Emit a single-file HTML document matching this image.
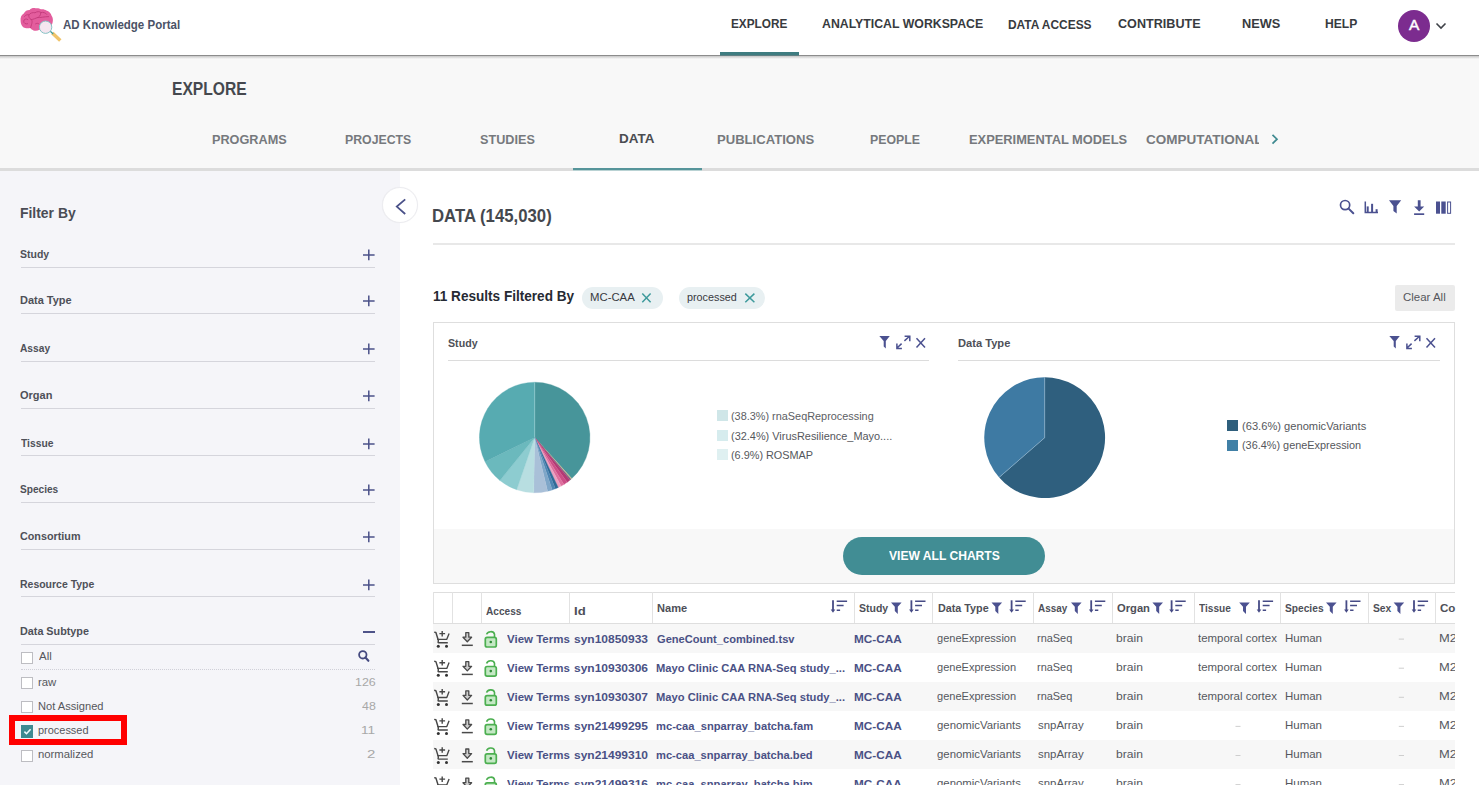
<!DOCTYPE html>
<html><head><meta charset="utf-8"><title>AD Knowledge Portal - Explore Data</title>
<style>
html,body{margin:0;padding:0;width:1479px;height:785px;overflow:hidden;background:#fff;}
body{position:relative;font-family:"Liberation Sans",sans-serif;}
.a{position:absolute;box-sizing:border-box;}
.t{position:absolute;white-space:pre;line-height:1;transform-origin:0 0;font-family:"Liberation Sans",sans-serif;}
.clipbox{position:absolute;overflow:hidden;}
svg{position:absolute;overflow:visible;}
</style></head><body>
<!-- ===== HEADER ===== -->
<div class="a" style="left:0;top:0;width:1479px;height:55px;background:#fff"></div>
<div class="a" style="left:0;top:55px;width:1479px;height:1px;background:#8c8c8c"></div>
<div class="a" style="left:0;top:56px;width:1479px;height:3px;background:linear-gradient(#c6c6c6,#f8f8f8)"></div>
<div class="a" style="left:720px;top:52px;width:79px;height:3px;background:#3e7c80"></div><div class="a" style="left:720px;top:55px;width:79px;height:1px;background:#5f7f82"></div>
<!-- logo -->
<svg style="left:0;top:0" width="80" height="55" viewBox="0 0 80 55">
  <path d="M20.6 21 C20.2 17.5 21.5 14.8 23.8 13.6 C25 11 27.3 9.9 29.6 10 C31 8.3 33.6 7.7 35.5 8.3 C37.5 7.9 39.6 8.3 41 9.3 C43.2 9 45.3 9.6 46.4 10.6 C49 11.4 51 13.3 51.6 15.8 C53 17.6 53.2 20.3 52.6 22.6 C52.2 25.5 50 28 47 29 C44.5 30.3 41.5 30.2 39.5 29.8 C37.8 30.8 35.3 31 33.5 30.4 C31.8 29.6 30.6 28.6 30.2 27.9 C28 28.3 25 28.3 23.6 27.4 C21.7 26 20.7 23.6 20.6 21 Z" fill="#e35d9d"/>
  <path d="M27.6 23.8 C25.6 24.4 23.6 23.2 23.7 21.2 C23.8 19.2 26 18.3 27.8 19.5 M24.5 16.4 C26 14.6 27.6 14.4 28.8 15 C30 13 33 12.2 35 12.8 C37 11.2 39.8 11.4 41 12.6 C43 12 45.6 12.6 46.8 14.4 M28.8 15 C28.6 17.2 29.4 18.4 31.2 19.6 C32.8 21 32 23 30.6 27.6 M31.2 19.6 C33.6 19.4 35.6 18.2 37.4 17.6 C39.4 17 40.6 15.6 40.8 12.8 M37.4 17.6 C40.4 17.8 44.5 16.6 48.6 16.6 M35.6 23.8 C37.5 22.8 38.8 23.2 40.2 25.5" fill="none" stroke="#c43c7c" stroke-width="0.95" stroke-linecap="round"/>
  <path d="M52.3 33 L60.3 40.6" stroke="#f0c46a" stroke-width="3.4" stroke-linecap="butt"/>
  <path d="M50.3 31.2 L53.2 34" stroke="#3f9a9a" stroke-width="1.3"/>
  <circle cx="45.6" cy="27.2" r="6.2" fill="#f5e6f0" stroke="#86c2c5" stroke-width="1.0"/>
</svg>
<!-- avatar -->
<div class="a" style="left:1398px;top:9.6px;width:32px;height:32px;border-radius:50%;background:#7c2c8f"></div>
<svg style="left:1434px;top:20px" width="14" height="12" viewBox="0 0 14 12"><path d="M2.5 3.5 L7 8 L11.5 3.5" fill="none" stroke="#3f4248" stroke-width="1.6"/></svg>

<!-- ===== SUBHEADER ===== -->
<div class="a" style="left:0;top:59px;width:1479px;height:109px;background:#f8f8f8"></div>
<div class="a" style="left:0;top:168px;width:1479px;height:3px;background:#dcdcdc"></div>
<div class="a" style="left:573px;top:168px;width:129px;height:2px;background:#56959a"></div><div class="a" style="left:573px;top:170px;width:129px;height:1px;background:#b9d2d3"></div>
<svg style="left:1268px;top:132px" width="14" height="14" viewBox="0 0 14 14"><path d="M4.5 2.8 L9 7.2 L4.5 11.6" fill="none" stroke="#3f8a90" stroke-width="1.7"/></svg>

<!-- ===== SIDEBAR ===== -->
<div class="a" style="left:0;top:171px;width:400px;height:614px;background:#f5f5f9"></div>
<!-- subtype list -->
<div class="a" style="left:20.5px;top:669px;width:354.5px;height:0;border-top:1px dotted #d0d0d8"></div>
<svg style="left:356px;top:650px" width="16" height="14" viewBox="0 0 16 14"><circle cx="6.8" cy="4.8" r="3.7" fill="none" stroke="#454a80" stroke-width="1.8"/><path d="M9.4 7.5 L12.4 10.8" stroke="#454a80" stroke-width="2.1" stroke-linecap="round"/></svg>
<div class="a" style="left:363px;top:631px;width:12px;height:2px;background:#4e5389"></div>
<div class="a" style="left:20.5px;top:652px;width:12.5px;height:12px;background:#fff;border:1px solid #bdbdc2"></div>
<div class="a" style="left:20.5px;top:676.5px;width:12.5px;height:12px;background:#fff;border:1px solid #bdbdc2"></div>
<div class="a" style="left:20.5px;top:701px;width:12.5px;height:12px;background:#fff;border:1px solid #bdbdc2"></div>
<div class="a" style="left:20.5px;top:725px;width:12.5px;height:12.8px;background:#3e8a91"></div>
<svg style="left:20.5px;top:725px" width="13" height="13" viewBox="0 0 13 13"><path d="M3.4 6.6 L5.5 8.7 L9.6 4.3" fill="none" stroke="#f0fcff" stroke-width="1.6"/></svg>
<div class="a" style="left:20.5px;top:749.5px;width:12.5px;height:12px;background:#fff;border:1px solid #bdbdc2"></div>
<div class="a" style="left:9px;top:715px;width:118px;height:30px;border:6px solid #ff0000"></div>

<!-- collapse circle -->
<div class="a" style="left:382px;top:187px;width:36px;height:36px;border-radius:50%;background:#fff;border:1px solid #ececf0;box-shadow:0 0 1px rgba(0,0,0,0.05)"></div>
<svg style="left:390px;top:195px" width="20" height="22" viewBox="0 0 20 22"><path d="M15.2 4.4 L6.8 11.6 L15.2 19" fill="none" stroke="#4a5189" stroke-width="1.8"/></svg>

<!-- ===== MAIN ===== -->
<!-- top icons -->
<svg style="left:1330px;top:195px" width="130" height="25" viewBox="1330 195 130 25">
  <circle cx="1345.1" cy="205.1" r="4.6" fill="none" stroke="#4b5190" stroke-width="1.7"/>
  <path d="M1348.6 208.6 L1353.3 213.3" stroke="#4b5190" stroke-width="2" stroke-linecap="round"/>
  <path d="M1365.3 201.5 L1365.3 212.5 L1378 212.5" fill="none" stroke="#4b5190" stroke-width="1.5"/>
  <rect x="1366.7" y="206.4" width="2" height="6" fill="#4b5190"/>
  <rect x="1371.1" y="203.8" width="2" height="8.6" fill="#4b5190"/>
  <rect x="1375.6" y="209.2" width="2" height="3.3" fill="#4b5190"/>
  <path d="M1389 200.3 L1401.2 200.3 L1396.7 206 L1396.7 213.5 L1393.4 211 L1393.4 206 Z" fill="#4b5190"/>
  <path d="M1417.8 200.3 L1420.6 200.3 L1420.6 206.4 L1424.2 206.4 L1419.2 211.4 L1414.1 206.4 L1417.8 206.4 Z" fill="#4b5190"/>
  <rect x="1414.1" y="213.3" width="10.1" height="1.7" fill="#4b5190"/>
  <rect x="1436" y="201.5" width="4" height="12.2" fill="#4b5190"/>
  <rect x="1441.3" y="201.5" width="4.4" height="12.2" fill="#4b5190"/>
  <rect x="1447.6" y="202" width="3" height="11.3" fill="none" stroke="#4b5190" stroke-width="1"/>
</svg>
<div class="a" style="left:433px;top:243px;width:1022px;height:2px;background:#e8e8e8"></div>
<!-- chips -->
<div class="a" style="left:582.4px;top:286.8px;width:80.5px;height:22px;border-radius:11px;background:#e8f0f2"></div>
<div class="a" style="left:679.1px;top:286.8px;width:85.5px;height:22px;border-radius:11px;background:#e8f0f2"></div>
<svg style="left:630px;top:285px" width="140" height="25" viewBox="630 285 140 25">
  <path d="M642.3 293.6 L650.6 302.2 M650.6 293.6 L642.3 302.2" stroke="#3e9a9c" stroke-width="1.5"/>
  <path d="M745.3 293.6 L754.4 302.2 M754.4 293.6 L745.3 302.2" stroke="#3e9a9c" stroke-width="1.5"/>
</svg>
<div class="a" style="left:1395px;top:285px;width:60px;height:26px;background:#ebebeb;border-radius:2px"></div>

<!-- chart box -->
<div class="a" style="left:433px;top:322px;width:1022px;height:262px;border:1px solid #dedede;background:#fff"></div>
<div class="a" style="left:434px;top:529px;width:1020px;height:54px;background:#f8f8f8"></div>
<div class="a" style="left:448px;top:360px;width:481px;height:1px;background:#dcdcdc"></div>
<div class="a" style="left:958px;top:360px;width:482px;height:1px;background:#dcdcdc"></div>
<svg style="left:870px;top:330px" width="580" height="25" viewBox="870 330 580 25">
  <g id="ci">
  <path d="M879.3 336.1 L889.8 336.1 L885.8 341 L885.8 348.5 L883.7 346.6 L883.7 341 Z" fill="#4b5190"/>
  <path d="M904.4 340.9 L909.3 336.5 M904.6 336.3 L909.8 336.3 L909.8 341.2" fill="none" stroke="#4b5190" stroke-width="1.5"/>
  <path d="M901.6 343.6 L897 348 M896.9 343.5 L896.9 348.6 L901.9 348.6" fill="none" stroke="#4b5190" stroke-width="1.5"/>
  <path d="M916.5 338.3 L925 347.6 M925 338.3 L916.5 347.6" stroke="#4b5190" stroke-width="1.5"/>
  </g>
  <use href="#ci" x="510"/>
</svg>
<!-- legend squares -->
<div class="a" style="left:717.3px;top:410.3px;width:11px;height:11px;background:#cfe6e8"></div>
<div class="a" style="left:717.3px;top:430px;width:11px;height:11px;background:#d6ecee"></div>
<div class="a" style="left:717.3px;top:449.2px;width:11px;height:11px;background:#dff0f1"></div>
<div class="a" style="left:1227.3px;top:420.3px;width:11px;height:11px;background:#2f5f7c"></div>
<div class="a" style="left:1227.3px;top:439.7px;width:11px;height:11px;background:#4080a6"></div>
<!-- button -->
<div class="a" style="left:843px;top:537.3px;width:202px;height:37.7px;border-radius:19px;background:#418d94"></div>

<div class="a" style="left:20.5px;top:266.7px;width:354.5px;height:1px;background:#d5d5dc"></div>
<svg style="left:362px;top:249.2px" width="14" height="12" viewBox="0 0 14 12"><path d="M1 6 L12.6 6 M6.8 0.5 L6.8 11.3" stroke="#4b5189" stroke-width="1.5"/></svg>
<div class="a" style="left:20.5px;top:312.8px;width:354.5px;height:1px;background:#d5d5dc"></div>
<svg style="left:362px;top:295.3px" width="14" height="12" viewBox="0 0 14 12"><path d="M1 6 L12.6 6 M6.8 0.5 L6.8 11.3" stroke="#4b5189" stroke-width="1.5"/></svg>
<div class="a" style="left:20.5px;top:360.5px;width:354.5px;height:1px;background:#d5d5dc"></div>
<svg style="left:362px;top:343.0px" width="14" height="12" viewBox="0 0 14 12"><path d="M1 6 L12.6 6 M6.8 0.5 L6.8 11.3" stroke="#4b5189" stroke-width="1.5"/></svg>
<div class="a" style="left:20.5px;top:407.7px;width:354.5px;height:1px;background:#d5d5dc"></div>
<svg style="left:362px;top:390.2px" width="14" height="12" viewBox="0 0 14 12"><path d="M1 6 L12.6 6 M6.8 0.5 L6.8 11.3" stroke="#4b5189" stroke-width="1.5"/></svg>
<div class="a" style="left:20.5px;top:455.3px;width:354.5px;height:1px;background:#d5d5dc"></div>
<svg style="left:362px;top:437.8px" width="14" height="12" viewBox="0 0 14 12"><path d="M1 6 L12.6 6 M6.8 0.5 L6.8 11.3" stroke="#4b5189" stroke-width="1.5"/></svg>
<div class="a" style="left:20.5px;top:501.8px;width:354.5px;height:1px;background:#d5d5dc"></div>
<svg style="left:362px;top:484.3px" width="14" height="12" viewBox="0 0 14 12"><path d="M1 6 L12.6 6 M6.8 0.5 L6.8 11.3" stroke="#4b5189" stroke-width="1.5"/></svg>
<div class="a" style="left:20.5px;top:548.8px;width:354.5px;height:1px;background:#d5d5dc"></div>
<svg style="left:362px;top:531.3px" width="14" height="12" viewBox="0 0 14 12"><path d="M1 6 L12.6 6 M6.8 0.5 L6.8 11.3" stroke="#4b5189" stroke-width="1.5"/></svg>
<div class="a" style="left:20.5px;top:596.2px;width:354.5px;height:1px;background:#d5d5dc"></div>
<svg style="left:362px;top:578.7px" width="14" height="12" viewBox="0 0 14 12"><path d="M1 6 L12.6 6 M6.8 0.5 L6.8 11.3" stroke="#4b5189" stroke-width="1.5"/></svg>
<div class="a" style="left:20.5px;top:643.7px;width:354.5px;height:1px;background:#d5d5dc"></div>
<svg style="left:0;top:0" width="1479" height="785" viewBox="0 0 1479 785">
<path d="M534.70 437.50 L534.70 382.20 A55.3 55.3 0 0 1 571.77 478.53 Z" fill="#47959a" stroke="#47959a" stroke-width="0.3"/>
<path d="M534.70 437.50 L571.77 478.53 A55.3 55.3 0 0 1 570.98 479.24 Z" fill="#c9b98f" stroke="#c9b98f" stroke-width="0.3"/>
<path d="M534.70 437.50 L570.98 479.24 A55.3 55.3 0 0 1 570.10 479.99 Z" fill="#6c6480" stroke="#6c6480" stroke-width="0.3"/>
<path d="M534.70 437.50 L570.10 479.99 A55.3 55.3 0 0 1 567.20 482.24 Z" fill="#b23a74" stroke="#b23a74" stroke-width="0.3"/>
<path d="M534.70 437.50 L567.20 482.24 A55.3 55.3 0 0 1 564.00 484.40 Z" fill="#cc4d86" stroke="#cc4d86" stroke-width="0.3"/>
<path d="M534.70 437.50 L564.00 484.40 A55.3 55.3 0 0 1 561.09 486.10 Z" fill="#de6f9e" stroke="#de6f9e" stroke-width="0.3"/>
<path d="M534.70 437.50 L561.09 486.10 A55.3 55.3 0 0 1 558.25 487.54 Z" fill="#eba0c0" stroke="#eba0c0" stroke-width="0.3"/>
<path d="M534.70 437.50 L558.25 487.54 A55.3 55.3 0 0 1 555.42 488.77 Z" fill="#2f6a96" stroke="#2f6a96" stroke-width="0.3"/>
<path d="M534.70 437.50 L555.42 488.77 A55.3 55.3 0 0 1 552.25 489.94 Z" fill="#4e86b3" stroke="#4e86b3" stroke-width="0.3"/>
<path d="M534.70 437.50 L552.25 489.94 A55.3 55.3 0 0 1 547.61 491.27 Z" fill="#7ea6c8" stroke="#7ea6c8" stroke-width="0.3"/>
<path d="M534.70 437.50 L547.61 491.27 A55.3 55.3 0 0 1 533.73 492.79 Z" fill="#a9c0d8" stroke="#a9c0d8" stroke-width="0.3"/>
<path d="M534.70 437.50 L533.73 492.79 A55.3 55.3 0 0 1 516.70 489.79 Z" fill="#b8dee1" stroke="#b8dee1" stroke-width="0.3"/>
<path d="M534.70 437.50 L516.70 489.79 A55.3 55.3 0 0 1 499.90 480.48 Z" fill="#8dccd0" stroke="#8dccd0" stroke-width="0.3"/>
<path d="M534.70 437.50 L499.90 480.48 A55.3 55.3 0 0 1 485.00 461.74 Z" fill="#6bb9bd" stroke="#6bb9bd" stroke-width="0.3"/>
<path d="M534.70 437.50 L485.00 461.74 A55.3 55.3 0 0 1 534.70 382.20 Z" fill="#57abb1" stroke="#57abb1" stroke-width="0.3"/>
<path d="M534.7 437.5 L534.7 382.2" stroke="#9fd3d6" stroke-width="0.6"/>
<path d="M1044.70 437.70 L1044.70 377.30 A60.4 60.4 0 1 1 999.18 477.41 Z" fill="#2f5f7e"/>
<path d="M1044.70 437.70 L999.18 477.41 A60.4 60.4 0 0 1 1044.70 377.30 Z" fill="#3e7aa3"/>
<path d="M1044.7 437.7 L1044.7 377.3 M1044.7 437.7 L999.1 477.3" stroke="#8fb4cc" stroke-width="0.6"/>
</svg>
<div class="clipbox" style="left:433px;top:585px;width:1022px;height:200px">
<div class="a" style="left:0;top:38.8px;width:1022px;height:29.1px;background:#f7f7f7"></div>
<div class="a" style="left:0;top:67.9px;width:1022px;height:29.1px;background:#ffffff"></div>
<div class="a" style="left:0;top:97.0px;width:1022px;height:29.1px;background:#f7f7f7"></div>
<div class="a" style="left:0;top:126.1px;width:1022px;height:29.1px;background:#ffffff"></div>
<div class="a" style="left:0;top:155.2px;width:1022px;height:29.1px;background:#f7f7f7"></div>
<div class="a" style="left:0;top:184.3px;width:1022px;height:29.1px;background:#ffffff"></div>
<div class="a" style="left:0;top:7px;width:1022px;height:1px;background:#dedede"></div>
<div class="a" style="left:0;top:37.5px;width:1022px;height:1.6px;background:#dedede"></div>
<div class="a" style="left:-0.1px;top:7px;width:1px;height:31px;background:#e2e2e2"></div>
<div class="a" style="left:19.1px;top:7px;width:1px;height:31px;background:#e2e2e2"></div>
<div class="a" style="left:48.0px;top:7px;width:1px;height:31px;background:#e2e2e2"></div>
<div class="a" style="left:135.9px;top:7px;width:1px;height:31px;background:#e2e2e2"></div>
<div class="a" style="left:219.0px;top:7px;width:1px;height:31px;background:#e2e2e2"></div>
<div class="a" style="left:420.8px;top:7px;width:1px;height:31px;background:#e2e2e2"></div>
<div class="a" style="left:499.0px;top:7px;width:1px;height:31px;background:#e2e2e2"></div>
<div class="a" style="left:600.0px;top:7px;width:1px;height:31px;background:#e2e2e2"></div>
<div class="a" style="left:678.9px;top:7px;width:1px;height:31px;background:#e2e2e2"></div>
<div class="a" style="left:760.9px;top:7px;width:1px;height:31px;background:#e2e2e2"></div>
<div class="a" style="left:846.9px;top:7px;width:1px;height:31px;background:#e2e2e2"></div>
<div class="a" style="left:934.8px;top:7px;width:1px;height:31px;background:#e2e2e2"></div>
<div class="a" style="left:1002.0px;top:7px;width:1px;height:31px;background:#e2e2e2"></div>
</div>
<svg style="left:0;top:0" width="1479" height="785" viewBox="0 0 1479 785">
<defs><clipPath id="tc"><rect x="433" y="585" width="1022" height="200"/></clipPath></defs><g clip-path="url(#tc)">
<path d="M833.0 600.3 L833.0 611.0" stroke="#464b85" stroke-width="1.8"/><path d="M830.7 609.5 L833.0 612.7 L835.3 609.5 Z" fill="#464b85"/><path d="M836.7 601.3 L847.1 601.3 M836.7 605.6 L843.6 605.6 M836.7 610.3 L840.1 610.3" stroke="#464b85" stroke-width="1.5"/>
<path d="M891.0 602.4 L901.6 602.4 L897.8 606.8 L897.8 614.0 L894.8 611.0 L894.8 606.8 Z" fill="#4b5190"/>
<path d="M911.4 600.3 L911.4 611.0" stroke="#464b85" stroke-width="1.8"/><path d="M909.1 609.5 L911.4 612.7 L913.7 609.5 Z" fill="#464b85"/><path d="M915.1 601.3 L925.5 601.3 M915.1 605.6 L922.0 605.6 M915.1 610.3 L918.5 610.3" stroke="#464b85" stroke-width="1.5"/>
<path d="M991.5 602.4 L1002.1 602.4 L998.3 606.8 L998.3 614.0 L995.3 611.0 L995.3 606.8 Z" fill="#4b5190"/>
<path d="M1011.6 600.3 L1011.6 611.0" stroke="#464b85" stroke-width="1.8"/><path d="M1009.3 609.5 L1011.6 612.7 L1013.9 609.5 Z" fill="#464b85"/><path d="M1015.3 601.3 L1025.7 601.3 M1015.3 605.6 L1022.2 605.6 M1015.3 610.3 L1018.7 610.3" stroke="#464b85" stroke-width="1.5"/>
<path d="M1071.0 602.4 L1081.6 602.4 L1077.8 606.8 L1077.8 614.0 L1074.8 611.0 L1074.8 606.8 Z" fill="#4b5190"/>
<path d="M1091.2 600.3 L1091.2 611.0" stroke="#464b85" stroke-width="1.8"/><path d="M1088.9 609.5 L1091.2 612.7 L1093.5 609.5 Z" fill="#464b85"/><path d="M1094.9 601.3 L1105.3 601.3 M1094.9 605.6 L1101.8 605.6 M1094.9 610.3 L1098.3 610.3" stroke="#464b85" stroke-width="1.5"/>
<path d="M1152.4 602.4 L1163.0 602.4 L1159.2 606.8 L1159.2 614.0 L1156.2 611.0 L1156.2 606.8 Z" fill="#4b5190"/>
<path d="M1171.6 600.3 L1171.6 611.0" stroke="#464b85" stroke-width="1.8"/><path d="M1169.3 609.5 L1171.6 612.7 L1173.9 609.5 Z" fill="#464b85"/><path d="M1175.3 601.3 L1185.7 601.3 M1175.3 605.6 L1182.2 605.6 M1175.3 610.3 L1178.7 610.3" stroke="#464b85" stroke-width="1.5"/>
<path d="M1239.2 602.4 L1249.8 602.4 L1246.0 606.8 L1246.0 614.0 L1243.0 611.0 L1243.0 606.8 Z" fill="#4b5190"/>
<path d="M1259.0 600.3 L1259.0 611.0" stroke="#464b85" stroke-width="1.8"/><path d="M1256.7 609.5 L1259.0 612.7 L1261.3 609.5 Z" fill="#464b85"/><path d="M1262.7 601.3 L1273.1 601.3 M1262.7 605.6 L1269.6 605.6 M1262.7 610.3 L1266.1 610.3" stroke="#464b85" stroke-width="1.5"/>
<path d="M1326.0 602.4 L1336.6 602.4 L1332.8 606.8 L1332.8 614.0 L1329.8 611.0 L1329.8 606.8 Z" fill="#4b5190"/>
<path d="M1346.4 600.3 L1346.4 611.0" stroke="#464b85" stroke-width="1.8"/><path d="M1344.1 609.5 L1346.4 612.7 L1348.7 609.5 Z" fill="#464b85"/><path d="M1350.1 601.3 L1360.5 601.3 M1350.1 605.6 L1357.0 605.6 M1350.1 610.3 L1353.5 610.3" stroke="#464b85" stroke-width="1.5"/>
<path d="M1393.6 602.4 L1404.2 602.4 L1400.4 606.8 L1400.4 614.0 L1397.4 611.0 L1397.4 606.8 Z" fill="#4b5190"/>
<path d="M1414.0 600.3 L1414.0 611.0" stroke="#464b85" stroke-width="1.8"/><path d="M1411.7 609.5 L1414.0 612.7 L1416.3 609.5 Z" fill="#464b85"/><path d="M1417.7 601.3 L1428.1 601.3 M1417.7 605.6 L1424.6 605.6 M1417.7 610.3 L1421.1 610.3" stroke="#464b85" stroke-width="1.5"/>
<g transform="translate(0 0.00)"><path d="M434.2 632.1 L435.9 632.5 L438.3 640.2 C438.5 641.8 437.6 642.7 438.6 642.7 L447.8 642.7" fill="none" stroke="#474747" stroke-width="1.45" stroke-linejoin="round"/><path d="M437.3 639.3 L446.8 639.3 L449.1 633.4" fill="none" stroke="#474747" stroke-width="1.35" stroke-linejoin="round"/><path d="M442.2 630.9 L442.2 636.4 M439.4 633.6 L445.1 633.6" stroke="#474747" stroke-width="1.4"/><circle cx="438.3" cy="646.2" r="1.5" fill="#333"/><circle cx="446.5" cy="646.2" r="1.5" fill="#333"/><path d="M465.8 632.6 L468.8 632.6 L468.8 637.2 L471.6 637.2 L467.3 641.8 L463 637.2 L465.8 637.2 Z" fill="#cfcfcf" stroke="#4a4a4a" stroke-width="1.3" stroke-linejoin="round"/><path d="M461.8 645.3 L472.8 645.3" stroke="#4a4a4a" stroke-width="1.5"/><rect x="485.3" y="637.4" width="11" height="9.6" rx="1.8" fill="#c4e8c4" stroke="#4caf50" stroke-width="1.7"/><path d="M486.6 634.4 C487.4 631.2 493.6 630.4 494.5 634.2 L494.5 637.4" fill="none" stroke="#4caf50" stroke-width="1.6"/><circle cx="490.8" cy="642" r="1.3" fill="#2e8b36"/></g>
<g transform="translate(0 29.10)"><path d="M434.2 632.1 L435.9 632.5 L438.3 640.2 C438.5 641.8 437.6 642.7 438.6 642.7 L447.8 642.7" fill="none" stroke="#474747" stroke-width="1.45" stroke-linejoin="round"/><path d="M437.3 639.3 L446.8 639.3 L449.1 633.4" fill="none" stroke="#474747" stroke-width="1.35" stroke-linejoin="round"/><path d="M442.2 630.9 L442.2 636.4 M439.4 633.6 L445.1 633.6" stroke="#474747" stroke-width="1.4"/><circle cx="438.3" cy="646.2" r="1.5" fill="#333"/><circle cx="446.5" cy="646.2" r="1.5" fill="#333"/><path d="M465.8 632.6 L468.8 632.6 L468.8 637.2 L471.6 637.2 L467.3 641.8 L463 637.2 L465.8 637.2 Z" fill="#cfcfcf" stroke="#4a4a4a" stroke-width="1.3" stroke-linejoin="round"/><path d="M461.8 645.3 L472.8 645.3" stroke="#4a4a4a" stroke-width="1.5"/><rect x="485.3" y="637.4" width="11" height="9.6" rx="1.8" fill="#c4e8c4" stroke="#4caf50" stroke-width="1.7"/><path d="M486.6 634.4 C487.4 631.2 493.6 630.4 494.5 634.2 L494.5 637.4" fill="none" stroke="#4caf50" stroke-width="1.6"/><circle cx="490.8" cy="642" r="1.3" fill="#2e8b36"/></g>
<g transform="translate(0 58.20)"><path d="M434.2 632.1 L435.9 632.5 L438.3 640.2 C438.5 641.8 437.6 642.7 438.6 642.7 L447.8 642.7" fill="none" stroke="#474747" stroke-width="1.45" stroke-linejoin="round"/><path d="M437.3 639.3 L446.8 639.3 L449.1 633.4" fill="none" stroke="#474747" stroke-width="1.35" stroke-linejoin="round"/><path d="M442.2 630.9 L442.2 636.4 M439.4 633.6 L445.1 633.6" stroke="#474747" stroke-width="1.4"/><circle cx="438.3" cy="646.2" r="1.5" fill="#333"/><circle cx="446.5" cy="646.2" r="1.5" fill="#333"/><path d="M465.8 632.6 L468.8 632.6 L468.8 637.2 L471.6 637.2 L467.3 641.8 L463 637.2 L465.8 637.2 Z" fill="#cfcfcf" stroke="#4a4a4a" stroke-width="1.3" stroke-linejoin="round"/><path d="M461.8 645.3 L472.8 645.3" stroke="#4a4a4a" stroke-width="1.5"/><rect x="485.3" y="637.4" width="11" height="9.6" rx="1.8" fill="#c4e8c4" stroke="#4caf50" stroke-width="1.7"/><path d="M486.6 634.4 C487.4 631.2 493.6 630.4 494.5 634.2 L494.5 637.4" fill="none" stroke="#4caf50" stroke-width="1.6"/><circle cx="490.8" cy="642" r="1.3" fill="#2e8b36"/></g>
<g transform="translate(0 87.30)"><path d="M434.2 632.1 L435.9 632.5 L438.3 640.2 C438.5 641.8 437.6 642.7 438.6 642.7 L447.8 642.7" fill="none" stroke="#474747" stroke-width="1.45" stroke-linejoin="round"/><path d="M437.3 639.3 L446.8 639.3 L449.1 633.4" fill="none" stroke="#474747" stroke-width="1.35" stroke-linejoin="round"/><path d="M442.2 630.9 L442.2 636.4 M439.4 633.6 L445.1 633.6" stroke="#474747" stroke-width="1.4"/><circle cx="438.3" cy="646.2" r="1.5" fill="#333"/><circle cx="446.5" cy="646.2" r="1.5" fill="#333"/><path d="M465.8 632.6 L468.8 632.6 L468.8 637.2 L471.6 637.2 L467.3 641.8 L463 637.2 L465.8 637.2 Z" fill="#cfcfcf" stroke="#4a4a4a" stroke-width="1.3" stroke-linejoin="round"/><path d="M461.8 645.3 L472.8 645.3" stroke="#4a4a4a" stroke-width="1.5"/><rect x="485.3" y="637.4" width="11" height="9.6" rx="1.8" fill="#c4e8c4" stroke="#4caf50" stroke-width="1.7"/><path d="M486.6 634.4 C487.4 631.2 493.6 630.4 494.5 634.2 L494.5 637.4" fill="none" stroke="#4caf50" stroke-width="1.6"/><circle cx="490.8" cy="642" r="1.3" fill="#2e8b36"/></g>
<g transform="translate(0 116.40)"><path d="M434.2 632.1 L435.9 632.5 L438.3 640.2 C438.5 641.8 437.6 642.7 438.6 642.7 L447.8 642.7" fill="none" stroke="#474747" stroke-width="1.45" stroke-linejoin="round"/><path d="M437.3 639.3 L446.8 639.3 L449.1 633.4" fill="none" stroke="#474747" stroke-width="1.35" stroke-linejoin="round"/><path d="M442.2 630.9 L442.2 636.4 M439.4 633.6 L445.1 633.6" stroke="#474747" stroke-width="1.4"/><circle cx="438.3" cy="646.2" r="1.5" fill="#333"/><circle cx="446.5" cy="646.2" r="1.5" fill="#333"/><path d="M465.8 632.6 L468.8 632.6 L468.8 637.2 L471.6 637.2 L467.3 641.8 L463 637.2 L465.8 637.2 Z" fill="#cfcfcf" stroke="#4a4a4a" stroke-width="1.3" stroke-linejoin="round"/><path d="M461.8 645.3 L472.8 645.3" stroke="#4a4a4a" stroke-width="1.5"/><rect x="485.3" y="637.4" width="11" height="9.6" rx="1.8" fill="#c4e8c4" stroke="#4caf50" stroke-width="1.7"/><path d="M486.6 634.4 C487.4 631.2 493.6 630.4 494.5 634.2 L494.5 637.4" fill="none" stroke="#4caf50" stroke-width="1.6"/><circle cx="490.8" cy="642" r="1.3" fill="#2e8b36"/></g>
<g transform="translate(0 145.50)"><path d="M434.2 632.1 L435.9 632.5 L438.3 640.2 C438.5 641.8 437.6 642.7 438.6 642.7 L447.8 642.7" fill="none" stroke="#474747" stroke-width="1.45" stroke-linejoin="round"/><path d="M437.3 639.3 L446.8 639.3 L449.1 633.4" fill="none" stroke="#474747" stroke-width="1.35" stroke-linejoin="round"/><path d="M442.2 630.9 L442.2 636.4 M439.4 633.6 L445.1 633.6" stroke="#474747" stroke-width="1.4"/><circle cx="438.3" cy="646.2" r="1.5" fill="#333"/><circle cx="446.5" cy="646.2" r="1.5" fill="#333"/><path d="M465.8 632.6 L468.8 632.6 L468.8 637.2 L471.6 637.2 L467.3 641.8 L463 637.2 L465.8 637.2 Z" fill="#cfcfcf" stroke="#4a4a4a" stroke-width="1.3" stroke-linejoin="round"/><path d="M461.8 645.3 L472.8 645.3" stroke="#4a4a4a" stroke-width="1.5"/><rect x="485.3" y="637.4" width="11" height="9.6" rx="1.8" fill="#c4e8c4" stroke="#4caf50" stroke-width="1.7"/><path d="M486.6 634.4 C487.4 631.2 493.6 630.4 494.5 634.2 L494.5 637.4" fill="none" stroke="#4caf50" stroke-width="1.6"/><circle cx="490.8" cy="642" r="1.3" fill="#2e8b36"/></g>
<path d="M1398.8 639.1 L1404 639.1" stroke="#c8c8c8" stroke-width="0.9"/>
<path d="M1398.8 668.2 L1404 668.2" stroke="#c8c8c8" stroke-width="0.9"/>
<path d="M1398.8 697.3 L1404 697.3" stroke="#c8c8c8" stroke-width="0.9"/>
<path d="M1398.8 726.4 L1404 726.4" stroke="#c8c8c8" stroke-width="0.9"/>
<path d="M1235.5 726.4 L1240.5 726.4" stroke="#c8c8c8" stroke-width="0.9"/>
<path d="M1398.8 755.5 L1404 755.5" stroke="#c8c8c8" stroke-width="0.9"/>
<path d="M1235.5 755.5 L1240.5 755.5" stroke="#c8c8c8" stroke-width="0.9"/>
<path d="M1398.8 784.6 L1404 784.6" stroke="#c8c8c8" stroke-width="0.9"/>
<path d="M1235.5 784.6 L1240.5 784.6" stroke="#c8c8c8" stroke-width="0.9"/>
</g></svg>
<div class="t" style="left:63.47px;top:19.00px;font-size:12.4px;font-weight:bold;color:#4b5266;transform:scaleX(0.9297)">AD Knowledge Portal</div>
<div class="t" style="left:730.92px;top:17.38px;font-size:13.6px;font-weight:bold;color:#383b40;transform:scaleX(0.8676)">EXPLORE</div>
<div class="t" style="left:821.84px;top:16.78px;font-size:13.6px;font-weight:bold;color:#383b40;transform:scaleX(0.9054)">ANALYTICAL WORKSPACE</div>
<div class="t" style="left:1008.41px;top:17.78px;font-size:13.6px;font-weight:bold;color:#383b40;transform:scaleX(0.8781)">DATA ACCESS</div>
<div class="t" style="left:1118.21px;top:16.68px;font-size:13.6px;font-weight:bold;color:#383b40;transform:scaleX(0.9271)">CONTRIBUTE</div>
<div class="t" style="left:1241.66px;top:16.68px;font-size:13.6px;font-weight:bold;color:#383b40;transform:scaleX(0.9371)">NEWS</div>
<div class="t" style="left:1324.90px;top:16.68px;font-size:13.6px;font-weight:bold;color:#383b40;transform:scaleX(0.8918)">HELP</div>
<div class="t" style="left:1408.97px;top:17.30px;font-size:15px;font-weight:normal;color:#ffffff;transform:scaleX(1.0329);-webkit-text-stroke:0.45px #fff">A</div>
<div class="t" style="left:171.54px;top:80.14px;font-size:18.5px;font-weight:bold;color:#45484e;transform:scaleX(0.8451)">EXPLORE</div>
<div class="t" style="left:211.95px;top:133.19px;font-size:13.0px;font-weight:bold;color:#76797d;transform:scaleX(0.9757)">PROGRAMS</div>
<div class="t" style="left:345.47px;top:133.19px;font-size:13.0px;font-weight:bold;color:#76797d;transform:scaleX(0.9455)">PROJECTS</div>
<div class="t" style="left:480.24px;top:133.19px;font-size:13.0px;font-weight:bold;color:#76797d;transform:scaleX(0.9730)">STUDIES</div>
<div class="t" style="left:618.90px;top:132.39px;font-size:13.0px;font-weight:bold;color:#4a4c51;transform:scaleX(1.0342)">DATA</div>
<div class="t" style="left:717.42px;top:133.19px;font-size:13.0px;font-weight:bold;color:#76797d;transform:scaleX(1.0060)">PUBLICATIONS</div>
<div class="t" style="left:869.57px;top:133.19px;font-size:13.0px;font-weight:bold;color:#76797d;transform:scaleX(0.9460)">PEOPLE</div>
<div class="t" style="left:968.93px;top:133.19px;font-size:13.0px;font-weight:bold;color:#76797d;transform:scaleX(0.9890)">EXPERIMENTAL MODELS</div>
<div class="clipbox" style="left:0;top:0;width:1258.6px;height:785px"><div class="t" style="left:1146.08px;top:133.19px;font-size:13.0px;font-weight:bold;color:#76797d;transform:scaleX(1.0389)">COMPUTATIONAL</div></div>
<div class="t" style="left:19.79px;top:205.58px;font-size:14.2px;font-weight:bold;color:#4a4c55;transform:scaleX(0.9812)">Filter By</div>
<div class="t" style="left:20.30px;top:249.13px;font-size:11.3px;font-weight:bold;color:#4e5058;transform:scaleX(0.9290)">Study</div>
<div class="t" style="left:19.92px;top:295.23px;font-size:11.3px;font-weight:bold;color:#4e5058;transform:scaleX(0.9707)">Data Type</div>
<div class="t" style="left:20.31px;top:342.93px;font-size:11.3px;font-weight:bold;color:#4e5058;transform:scaleX(0.9034)">Assay</div>
<div class="t" style="left:20.16px;top:390.13px;font-size:11.3px;font-weight:bold;color:#4e5058;transform:scaleX(0.9743)">Organ</div>
<div class="t" style="left:20.53px;top:437.73px;font-size:11.3px;font-weight:bold;color:#4e5058;transform:scaleX(0.9110)">Tissue</div>
<div class="t" style="left:20.31px;top:484.23px;font-size:11.3px;font-weight:bold;color:#4e5058;transform:scaleX(0.8955)">Species</div>
<div class="t" style="left:20.17px;top:531.23px;font-size:11.3px;font-weight:bold;color:#4e5058;transform:scaleX(0.9542)">Consortium</div>
<div class="t" style="left:19.95px;top:578.63px;font-size:11.3px;font-weight:bold;color:#4e5058;transform:scaleX(0.9276)">Resource Type</div>
<div class="t" style="left:19.93px;top:626.13px;font-size:11.3px;font-weight:bold;color:#4e5058;transform:scaleX(0.9547)">Data Subtype</div>
<div class="t" style="left:38.92px;top:650.63px;font-size:11.3px;font-weight:normal;color:#55575c;transform:scaleX(1.0128)">All</div>
<div class="t" style="left:38.30px;top:677.43px;font-size:11.3px;font-weight:normal;color:#55575c;transform:scaleX(1.0057)">raw</div>
<div class="t" style="left:38.06px;top:701.43px;font-size:11.3px;font-weight:normal;color:#55575c;transform:scaleX(0.9847)">Not Assigned</div>
<div class="t" style="left:38.32px;top:725.43px;font-size:11.3px;font-weight:normal;color:#55575c;transform:scaleX(0.9695)">processed</div>
<div class="t" style="left:38.30px;top:749.03px;font-size:11.3px;font-weight:normal;color:#55575c;transform:scaleX(1.0023)">normalized</div>
<div class="t" style="left:354.59px;top:677.43px;font-size:11.3px;font-weight:normal;color:#a8a8a8;transform:scaleX(1.1029)">126</div>
<div class="t" style="left:361.58px;top:701.43px;font-size:11.3px;font-weight:normal;color:#a8a8a8;transform:scaleX(1.0947)">48</div>
<div class="t" style="left:361.31px;top:725.43px;font-size:11.3px;font-weight:normal;color:#a8a8a8;transform:scaleX(1.2048)">11</div>
<div class="t" style="left:367.24px;top:749.03px;font-size:11.3px;font-weight:normal;color:#a8a8a8;transform:scaleX(1.3268)">2</div>
<div class="t" style="left:432.20px;top:207.21px;font-size:18.3px;font-weight:bold;color:#45484e;transform:scaleX(0.9159)">DATA (145,030)</div>
<div class="t" style="left:433.08px;top:288.82px;font-size:14.5px;font-weight:bold;color:#262a33;transform:scaleX(0.9362)">11 Results Filtered By</div>
<div class="t" style="left:589.65px;top:291.93px;font-size:11.3px;font-weight:normal;color:#383a3f;transform:scaleX(1.0040)">MC-CAA</div>
<div class="t" style="left:687.03px;top:291.93px;font-size:11.3px;font-weight:normal;color:#383a3f;transform:scaleX(0.9557)">processed</div>
<div class="t" style="left:1403.42px;top:292.13px;font-size:11.3px;font-weight:normal;color:#55575c;transform:scaleX(1.0151)">Clear All</div>
<div class="t" style="left:447.99px;top:337.83px;font-size:11.3px;font-weight:bold;color:#4e5058;transform:scaleX(0.9419)">Study</div>
<div class="t" style="left:957.61px;top:337.83px;font-size:11.3px;font-weight:bold;color:#4e5058;transform:scaleX(0.9842)">Data Type</div>
<div class="t" style="left:731.03px;top:411.23px;font-size:11.3px;font-weight:normal;color:#5c5e63;transform:scaleX(0.9629)">(38.3%) rnaSeqReprocessing</div>
<div class="t" style="left:731.02px;top:430.83px;font-size:11.3px;font-weight:normal;color:#55575c;transform:scaleX(0.9665)">(32.4%) VirusResilience_Mayo....</div>
<div class="t" style="left:731.03px;top:449.83px;font-size:11.3px;font-weight:normal;color:#55575c;transform:scaleX(0.9617)">(6.9%) ROSMAP</div>
<div class="t" style="left:1241.71px;top:421.03px;font-size:11.3px;font-weight:normal;color:#55575c;transform:scaleX(0.9858)">(63.6%) genomicVariants</div>
<div class="t" style="left:1241.73px;top:440.33px;font-size:11.3px;font-weight:normal;color:#55575c;transform:scaleX(0.9626)">(36.4%) geneExpression</div>
<div class="t" style="left:888.77px;top:548.68px;font-size:13.6px;font-weight:bold;color:#ffffff;transform:scaleX(0.8890)">VIEW ALL CHARTS</div>
<div class="t" style="left:486.01px;top:606.43px;font-size:11.3px;font-weight:bold;color:#4e5058;transform:scaleX(0.8955)">Access</div>
<div class="t" style="left:573.69px;top:606.43px;font-size:11.3px;font-weight:bold;color:#4e5058;transform:scaleX(1.1594)">Id</div>
<div class="t" style="left:656.91px;top:603.43px;font-size:11.3px;font-weight:bold;color:#4e5058;transform:scaleX(0.9789)">Name</div>
<div class="t" style="left:858.70px;top:603.43px;font-size:11.3px;font-weight:bold;color:#4e5058;transform:scaleX(0.9290)">Study</div>
<div class="t" style="left:937.63px;top:603.43px;font-size:11.3px;font-weight:bold;color:#4e5058;transform:scaleX(0.9535)">Data Type</div>
<div class="t" style="left:1038.32px;top:603.43px;font-size:11.3px;font-weight:bold;color:#4e5058;transform:scaleX(0.8760)">Assay</div>
<div class="t" style="left:1116.75px;top:603.43px;font-size:11.3px;font-weight:bold;color:#4e5058;transform:scaleX(0.9899)">Organ</div>
<div class="t" style="left:1198.83px;top:603.43px;font-size:11.3px;font-weight:bold;color:#4e5058;transform:scaleX(0.8940)">Tissue</div>
<div class="t" style="left:1285.11px;top:603.43px;font-size:11.3px;font-weight:bold;color:#4e5058;transform:scaleX(0.9027)">Species</div>
<div class="t" style="left:1372.60px;top:603.43px;font-size:11.3px;font-weight:bold;color:#4e5058;transform:scaleX(0.9121)">Sex</div>
<div class="t" style="left:1439.54px;top:603.43px;font-size:11.3px;font-weight:bold;color:#4e5058;transform:scaleX(1.0265)">Co</div>
<div class="t" style="left:506.78px;top:632.58px;font-size:11.6px;font-weight:bold;color:#4a5185;transform:scaleX(0.9909)">View Terms</div>
<div class="t" style="left:573.99px;top:632.58px;font-size:11.6px;font-weight:bold;color:#4a5185;transform:scaleX(1.0346)">syn10850933</div>
<div class="t" style="left:656.52px;top:632.58px;font-size:11.6px;font-weight:bold;color:#4a5185;transform:scaleX(0.9571)">GeneCount_combined.tsv</div>
<div class="t" style="left:853.71px;top:632.58px;font-size:11.6px;font-weight:bold;color:#4a5185;transform:scaleX(1.0158)">MC-CAA</div>
<div class="t" style="left:936.76px;top:632.83px;font-size:11.3px;font-weight:normal;color:#55585e;transform:scaleX(0.9765)">geneExpression</div>
<div class="t" style="left:1037.32px;top:632.83px;font-size:11.3px;font-weight:normal;color:#55585e;transform:scaleX(0.9686)">rnaSeq</div>
<div class="t" style="left:1116.05px;top:632.83px;font-size:11.3px;font-weight:normal;color:#55585e;transform:scaleX(1.0695)">brain</div>
<div class="t" style="left:1198.30px;top:632.83px;font-size:11.3px;font-weight:normal;color:#55585e;transform:scaleX(1.0129)">temporal cortex</div>
<div class="t" style="left:1284.53px;top:632.83px;font-size:11.3px;font-weight:normal;color:#55585e;transform:scaleX(1.0158)">Human</div>
<div class="clipbox" style="left:0;top:0;width:1455.0px;height:785px"><div class="t" style="left:1438.61px;top:632.83px;font-size:11.3px;font-weight:normal;color:#55585e;transform:scaleX(1.1439)">M2</div></div>
<div class="t" style="left:506.78px;top:661.68px;font-size:11.6px;font-weight:bold;color:#4a5185;transform:scaleX(0.9909)">View Terms</div>
<div class="t" style="left:573.99px;top:661.68px;font-size:11.6px;font-weight:bold;color:#4a5185;transform:scaleX(1.0346)">syn10930306</div>
<div class="t" style="left:656.15px;top:661.68px;font-size:11.6px;font-weight:bold;color:#4a5185;transform:scaleX(0.9641)">Mayo Clinic CAA RNA-Seq study_...</div>
<div class="t" style="left:853.71px;top:661.68px;font-size:11.6px;font-weight:bold;color:#4a5185;transform:scaleX(1.0158)">MC-CAA</div>
<div class="t" style="left:936.76px;top:661.93px;font-size:11.3px;font-weight:normal;color:#55585e;transform:scaleX(0.9765)">geneExpression</div>
<div class="t" style="left:1037.32px;top:661.93px;font-size:11.3px;font-weight:normal;color:#55585e;transform:scaleX(0.9686)">rnaSeq</div>
<div class="t" style="left:1116.05px;top:661.93px;font-size:11.3px;font-weight:normal;color:#55585e;transform:scaleX(1.0695)">brain</div>
<div class="t" style="left:1198.30px;top:661.93px;font-size:11.3px;font-weight:normal;color:#55585e;transform:scaleX(1.0129)">temporal cortex</div>
<div class="t" style="left:1284.53px;top:661.93px;font-size:11.3px;font-weight:normal;color:#55585e;transform:scaleX(1.0158)">Human</div>
<div class="clipbox" style="left:0;top:0;width:1455.0px;height:785px"><div class="t" style="left:1438.61px;top:661.93px;font-size:11.3px;font-weight:normal;color:#55585e;transform:scaleX(1.1439)">M2</div></div>
<div class="t" style="left:506.78px;top:690.78px;font-size:11.6px;font-weight:bold;color:#4a5185;transform:scaleX(0.9909)">View Terms</div>
<div class="t" style="left:573.99px;top:690.78px;font-size:11.6px;font-weight:bold;color:#4a5185;transform:scaleX(1.0346)">syn10930307</div>
<div class="t" style="left:656.15px;top:690.78px;font-size:11.6px;font-weight:bold;color:#4a5185;transform:scaleX(0.9641)">Mayo Clinic CAA RNA-Seq study_...</div>
<div class="t" style="left:853.71px;top:690.78px;font-size:11.6px;font-weight:bold;color:#4a5185;transform:scaleX(1.0158)">MC-CAA</div>
<div class="t" style="left:936.76px;top:691.03px;font-size:11.3px;font-weight:normal;color:#55585e;transform:scaleX(0.9765)">geneExpression</div>
<div class="t" style="left:1037.32px;top:691.03px;font-size:11.3px;font-weight:normal;color:#55585e;transform:scaleX(0.9686)">rnaSeq</div>
<div class="t" style="left:1116.05px;top:691.03px;font-size:11.3px;font-weight:normal;color:#55585e;transform:scaleX(1.0695)">brain</div>
<div class="t" style="left:1198.30px;top:691.03px;font-size:11.3px;font-weight:normal;color:#55585e;transform:scaleX(1.0129)">temporal cortex</div>
<div class="t" style="left:1284.53px;top:691.03px;font-size:11.3px;font-weight:normal;color:#55585e;transform:scaleX(1.0158)">Human</div>
<div class="clipbox" style="left:0;top:0;width:1455.0px;height:785px"><div class="t" style="left:1438.61px;top:691.03px;font-size:11.3px;font-weight:normal;color:#55585e;transform:scaleX(1.1439)">M2</div></div>
<div class="t" style="left:506.78px;top:719.88px;font-size:11.6px;font-weight:bold;color:#4a5185;transform:scaleX(0.9909)">View Terms</div>
<div class="t" style="left:573.99px;top:719.88px;font-size:11.6px;font-weight:bold;color:#4a5185;transform:scaleX(1.0328)">syn21499295</div>
<div class="t" style="left:656.15px;top:719.88px;font-size:11.6px;font-weight:bold;color:#4a5185;transform:scaleX(0.9633)">mc-caa_snparray_batcha.fam</div>
<div class="t" style="left:853.71px;top:719.88px;font-size:11.6px;font-weight:bold;color:#4a5185;transform:scaleX(1.0158)">MC-CAA</div>
<div class="t" style="left:936.75px;top:720.13px;font-size:11.3px;font-weight:normal;color:#55585e;transform:scaleX(1.0061)">genomicVariants</div>
<div class="t" style="left:1037.67px;top:720.13px;font-size:11.3px;font-weight:normal;color:#55585e;transform:scaleX(1.0095)">snpArray</div>
<div class="t" style="left:1116.05px;top:720.13px;font-size:11.3px;font-weight:normal;color:#55585e;transform:scaleX(1.0695)">brain</div>
<div class="t" style="left:1284.53px;top:720.13px;font-size:11.3px;font-weight:normal;color:#55585e;transform:scaleX(1.0158)">Human</div>
<div class="clipbox" style="left:0;top:0;width:1455.0px;height:785px"><div class="t" style="left:1438.61px;top:720.13px;font-size:11.3px;font-weight:normal;color:#55585e;transform:scaleX(1.1439)">M2</div></div>
<div class="t" style="left:506.78px;top:748.98px;font-size:11.6px;font-weight:bold;color:#4a5185;transform:scaleX(0.9909)">View Terms</div>
<div class="t" style="left:573.99px;top:748.98px;font-size:11.6px;font-weight:bold;color:#4a5185;transform:scaleX(1.0346)">syn21499310</div>
<div class="t" style="left:656.16px;top:748.98px;font-size:11.6px;font-weight:bold;color:#4a5185;transform:scaleX(0.9609)">mc-caa_snparray_batcha.bed</div>
<div class="t" style="left:853.71px;top:748.98px;font-size:11.6px;font-weight:bold;color:#4a5185;transform:scaleX(1.0158)">MC-CAA</div>
<div class="t" style="left:936.75px;top:749.23px;font-size:11.3px;font-weight:normal;color:#55585e;transform:scaleX(1.0061)">genomicVariants</div>
<div class="t" style="left:1037.67px;top:749.23px;font-size:11.3px;font-weight:normal;color:#55585e;transform:scaleX(1.0095)">snpArray</div>
<div class="t" style="left:1116.05px;top:749.23px;font-size:11.3px;font-weight:normal;color:#55585e;transform:scaleX(1.0695)">brain</div>
<div class="t" style="left:1284.53px;top:749.23px;font-size:11.3px;font-weight:normal;color:#55585e;transform:scaleX(1.0158)">Human</div>
<div class="clipbox" style="left:0;top:0;width:1455.0px;height:785px"><div class="t" style="left:1438.61px;top:749.23px;font-size:11.3px;font-weight:normal;color:#55585e;transform:scaleX(1.1439)">M2</div></div>
<div class="t" style="left:506.78px;top:778.08px;font-size:11.6px;font-weight:bold;color:#4a5185;transform:scaleX(0.9909)">View Terms</div>
<div class="t" style="left:573.99px;top:778.08px;font-size:11.6px;font-weight:bold;color:#4a5185;transform:scaleX(1.0346)">syn21499316</div>
<div class="t" style="left:656.16px;top:778.08px;font-size:11.6px;font-weight:bold;color:#4a5185;transform:scaleX(0.9609)">mc-caa_snparray_batcha.bim</div>
<div class="t" style="left:853.71px;top:778.08px;font-size:11.6px;font-weight:bold;color:#4a5185;transform:scaleX(1.0158)">MC-CAA</div>
<div class="t" style="left:936.75px;top:778.33px;font-size:11.3px;font-weight:normal;color:#55585e;transform:scaleX(1.0061)">genomicVariants</div>
<div class="t" style="left:1037.67px;top:778.33px;font-size:11.3px;font-weight:normal;color:#55585e;transform:scaleX(1.0095)">snpArray</div>
<div class="t" style="left:1116.05px;top:778.33px;font-size:11.3px;font-weight:normal;color:#55585e;transform:scaleX(1.0695)">brain</div>
<div class="t" style="left:1284.53px;top:778.33px;font-size:11.3px;font-weight:normal;color:#55585e;transform:scaleX(1.0158)">Human</div>
<div class="clipbox" style="left:0;top:0;width:1455.0px;height:785px"><div class="t" style="left:1438.61px;top:778.33px;font-size:11.3px;font-weight:normal;color:#55585e;transform:scaleX(1.1439)">M2</div></div>
</body></html>
